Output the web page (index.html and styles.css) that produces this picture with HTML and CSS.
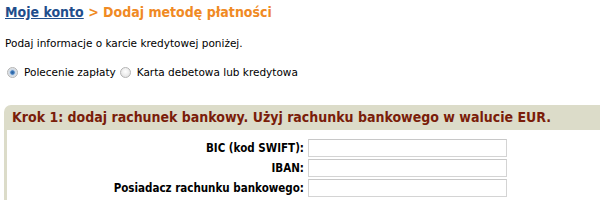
FILE: index.html
```html
<!DOCTYPE html>
<html lang="pl">
<head>
<meta charset="utf-8">
<link rel="stylesheet" href="styles.css">
</head>
<body>
<h1 class="title"><a href="#" class="crumb">Moje konto</a> <span class="current">&gt; Dodaj metodę płatności</span></h1>
<p class="intro">Podaj informacje o karcie kredytowej poniżej.</p>
<div class="choices">
  <label class="choice"><input type="radio" name="m" checked> Polecenie zapłaty</label>
  <label class="choice"><input type="radio" name="m"> Karta debetowa lub kredytowa</label>
</div>
<div class="panel">
  <h2 class="panel-head">Krok 1: dodaj rachunek bankowy. Użyj rachunku bankowego w walucie EUR.</h2>
  <div class="panel-body">
    <div class="form">
      <label class="lbl">BIC (kod SWIFT):</label><input class="field" type="text">
      <label class="lbl">IBAN:</label><input class="field" type="text">
      <label class="lbl">Posiadacz rachunku bankowego:</label><input class="field" type="text">
    </div>
  </div>
</div>
</body>
</html>
```
FILE: styles.css
```css
html, body { margin: 0; padding: 0; background: #fff; }
body { font-family: "DejaVu Sans", Verdana, sans-serif; font-size: 10.5px; color: #000; width: 600px; height: 200px; overflow: hidden; }
.title { margin: 0; padding: 3px 0 0 5px; font-family: "DejaVu Sans Condensed", "DejaVu Sans", sans-serif; font-size: 14px; font-weight: bold; line-height: 19px; }
.crumb { color: #1f4e8c; text-decoration: underline; }
.current { color: #f08a24; }
.intro { margin: 14px 0 0 5px; line-height: 14px; }
.choices { margin: 15px 0 0 7px; display: flex; align-items: center; line-height: 14px; }
.choice { display: flex; align-items: center; margin-right: 4px; }
.choice input { -webkit-appearance: none; appearance: none; box-sizing: border-box; margin: 0 6px 0 0; width: 11px; height: 11px; border-radius: 50%; border: 1px solid #b4b4b4; background: radial-gradient(circle at 50% 40%, #ffffff 0%, #e6e6e6 70%, #d0d0d0 100%); }
.choice input:checked { background: radial-gradient(circle at 50% 50%, #2a5f9a 0, #3f7cbf 28%, #c8d6e6 42%, #e8e8e8 75%); }
.panel { margin: 26px 0 0 4px; background: #dcdcc9; border-top-left-radius: 7px; padding: 0 0 0 3px; }
.panel-head { margin: 0; padding: 4px 0 5px 5px; font-family: "DejaVu Sans Condensed", "DejaVu Sans", sans-serif; font-size: 14px; font-weight: bold; color: #7a1d0a; line-height: 16px; }
.panel-body { background: #fff; padding: 9px 0 20px 0; }
.form { display: grid; grid-template-columns: 301px 199px; row-gap: 2px; align-items: center; }
.lbl { text-align: right; font-family: "DejaVu Sans Condensed", "DejaVu Sans", sans-serif; font-size: 11.5px; font-weight: bold; padding-right: 4px; }
.field { box-sizing: border-box; height: 18px; width: 199px; margin: 0; border: 1px solid #d4d4d4; border-top-color: #c8c8c8; background: #fff; padding: 0 2px; }
```
